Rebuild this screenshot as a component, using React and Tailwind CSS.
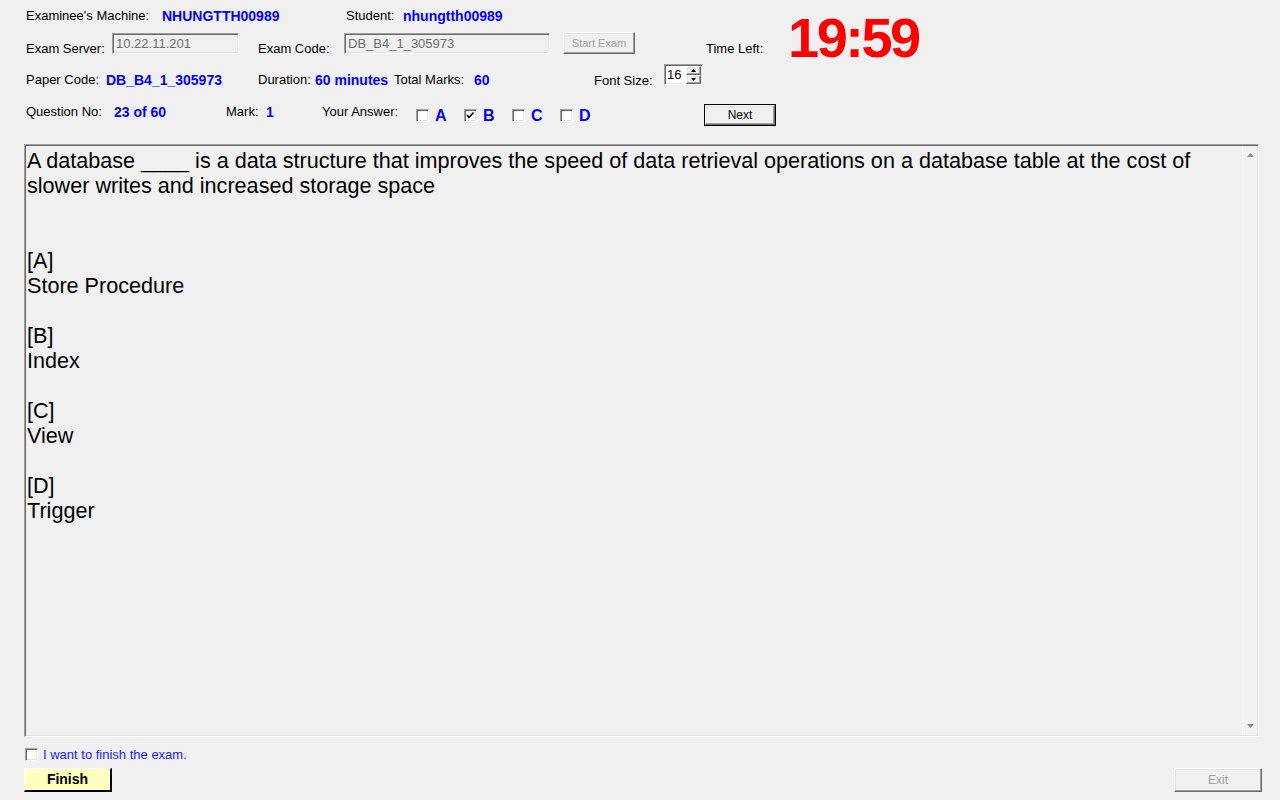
import React from "react";

const FONT = { fontFamily: '"Liberation Sans", Arial, sans-serif' };

const sunken =
  "border border-t-[#a0a0a0] border-l-[#a0a0a0] border-b-white border-r-white shadow-[inset_1px_1px_0_#696969,inset_-1px_-1px_0_#e3e3e3]";
const raised =
  "border border-t-white border-l-white border-b-[#696969] border-r-[#696969] shadow-[inset_-1px_-1px_0_#a0a0a0,inset_1px_1px_0_#e3e3e3]";

function CheckBox({ checked }) {
  return (
    <div className={"w-[13px] h-[13px] bg-white " + sunken + " flex items-center justify-center"}>
      {checked && (
        <svg width="9" height="9" viewBox="0 0 9 9">
          <polyline points="1,4 3,6.5 7.5,1.5" fill="none" stroke="#000" strokeWidth="1.6" />
        </svg>
      )}
    </div>
  );
}

function Label({ children, className = "" }) {
  return <div className={"text-[13px] leading-[16px] text-black whitespace-nowrap " + className}>{children}</div>;
}

function Value({ children, className = "" }) {
  return (
    <div className={"text-[14px] leading-[16px] font-bold text-[#0000ff] whitespace-nowrap " + className}>
      {children}
    </div>
  );
}

function Answer({ letter, checked }) {
  return (
    <div className="w-[48px] flex items-start">
      <div className="mt-[13px]">
        <CheckBox checked={checked} />
      </div>
      <div className="ml-[6px] mt-[11px] text-[16px] leading-[18px] font-bold text-[#0000ff]">{letter}</div>
    </div>
  );
}

const question =
  "A database ____ is a data structure that improves the speed of data retrieval operations on a database table at the cost of slower writes and increased storage space\n\n\n[A]\nStore Procedure\n\n[B]\nIndex\n\n[C]\nView\n\n[D]\nTrigger";

export default function App() {
  return (
    <div className="w-[1280px] h-[800px] bg-[#f0f0f0] flex flex-col overflow-hidden" style={FONT}>
      {/* Top block: rows 1-2 + timer */}
      <div className="flex h-[64px]">
        <div className="w-[788px] flex flex-col">
          {/* Row 1 */}
          <div className="h-[32px] flex items-center pl-[26px]">
            <Label className="w-[136px]">Examinee's Machine:</Label>
            <Value className="w-[184px]">NHUNGTTH00989</Value>
            <Label className="w-[57px]">Student:</Label>
            <Value>nhungtth00989</Value>
          </div>
          {/* Row 2 */}
          <div className="h-[32px] flex items-start pl-[26px]">
            <Label className="w-[86px] mt-[9px]">Exam Server:</Label>
            <div className={"w-[127px] h-[21px] mt-[1px] flex items-center pl-[3px] text-[13px] text-[#6d6d6d] " + sunken}>
              10.22.11.201
            </div>
            <div className="w-[19px]" />
            <Label className="w-[86px] mt-[9px]">Exam Code:</Label>
            <div className={"w-[206px] h-[21px] mt-[1px] flex items-center pl-[3px] text-[13px] text-[#6d6d6d] " + sunken}>
              DB_B4_1_305973
            </div>
            <div className="w-[13px]" />
            <div className={"w-[72px] h-[22px] flex items-center justify-center text-[11px] text-[#a0a0a0] " + raised}>
              Start Exam
            </div>
            <div className="w-[71px]" />
            <Label className="mt-[9px]">Time Left:</Label>
          </div>
        </div>
        <div className="h-[64px]">
          <div className="mt-[10px] text-[56px] leading-none font-bold text-[#ff0000] tracking-[-2.5px] whitespace-nowrap">
            19:59
          </div>
        </div>
      </div>

      {/* Row 3 */}
      <div className="h-[32px] flex items-start pl-[26px]">
        <Label className="w-[80px] mt-[8px]">Paper Code:</Label>
        <Value className="w-[152px] mt-[8px]">DB_B4_1_305973</Value>
        <Label className="w-[57px] mt-[8px]">Duration:</Label>
        <Value className="w-[79px] mt-[8px]">60 minutes</Value>
        <Label className="w-[80px] mt-[8px]">Total Marks:</Label>
        <Value className="w-[120px] mt-[8px]">60</Value>
        <Label className="w-[70px] mt-[9px]">Font Size:</Label>
        <div className={"w-[39px] h-[21px] bg-white flex items-center justify-between " + sunken}>
          <span className="pl-[2px] text-[13px] leading-none text-black">16</span>
          <div className="flex flex-col mr-[1px]">
            <div className={"w-[15px] h-[9px] bg-[#f0f0f0] flex items-center justify-center " + raised}>
              <svg width="5" height="3" viewBox="0 0 5 3">
                <polygon points="2.5,0 5,3 0,3" fill="#000" />
              </svg>
            </div>
            <div className={"w-[15px] h-[9px] bg-[#f0f0f0] flex items-center justify-center " + raised}>
              <svg width="5" height="3" viewBox="0 0 5 3">
                <polygon points="0,0 5,0 2.5,3" fill="#000" />
              </svg>
            </div>
          </div>
        </div>
      </div>

      {/* Row 4 */}
      <div className="h-[48px] flex items-start pl-[26px]">
        <Label className="w-[88px] mt-[8px]">Question No:</Label>
        <Value className="w-[112px] mt-[8px]">23 of 60</Value>
        <Label className="w-[40px] mt-[8px]">Mark:</Label>
        <Value className="w-[56px] mt-[8px]">1</Value>
        <Label className="w-[94px] mt-[8px]">Your Answer:</Label>
        <Answer letter="A" />
        <Answer letter="B" checked />
        <Answer letter="C" />
        <Answer letter="D" />
        <div className="w-[96px]" />
        <div className="mt-[8px] w-[72px] h-[22px] border border-black">
          <div className={"w-full h-full flex items-center justify-center text-[12px] text-black " + raised}>Next</div>
        </div>
      </div>

      {/* Question area */}
      <div className={"ml-[24px] w-[1235px] h-[593px] flex " + sunken}>
        <div className="flex-1 pl-[2px] pt-[3px] pr-[4px] text-[21.6px] leading-[25px] text-black whitespace-pre-wrap">
          {question}
        </div>
        <div className="w-[15px] my-[1px] mr-[1px] border-l border-l-[#fcfcfc] bg-[#f2f2f2] flex flex-col items-center justify-between py-[7px]">
          <svg width="7" height="4" viewBox="0 0 7 4">
            <polygon points="3.5,0 7,4 0,4" fill="#8a8a8a" />
          </svg>
          <svg width="7" height="4" viewBox="0 0 7 4">
            <polygon points="0,0 7,0 3.5,4" fill="#8a8a8a" />
          </svg>
        </div>
      </div>

      {/* Finish checkbox */}
      <div className="mt-[11px] pl-[25px] h-[13px] flex items-center">
        <CheckBox />
        <span className="ml-[5px] text-[13px] leading-none text-[#2020ff]">I want to finish the exam.</span>
      </div>

      {/* Buttons */}
      <div className="mt-[7px] pl-[24px] pr-[18px] flex justify-between">
        <div className="w-[88px] h-[24px] bg-[#ffffc0] border-t border-l border-t-white border-l-white border-b-2 border-r-2 border-b-black border-r-black flex items-center justify-center text-[14px] font-bold text-black">
          Finish
        </div>
        <div className={"w-[88px] h-[24px] flex items-center justify-center text-[12px] text-[#a0a0a0] " + raised}>
          Exit
        </div>
      </div>
    </div>
  );
}
